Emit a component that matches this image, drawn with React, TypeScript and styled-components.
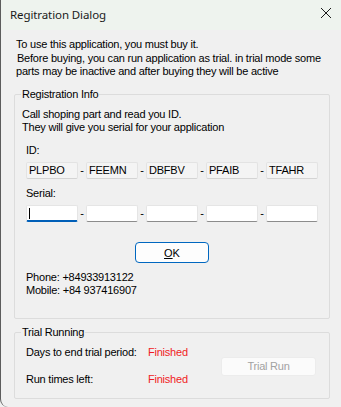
import React from "react";
import styled, { createGlobalStyle } from "styled-components";

const Global = createGlobalStyle`
  html, body { margin: 0; padding: 0; background: #f0f0f0; }
  * { box-sizing: border-box; }
`;

const Window = styled.div`
  width: 341px;
  height: 407px;
  background: #f0f0f0;
  border-left: 1px solid #5c5c5c;
  border-bottom-left-radius: 8px;
  display: flex;
  flex-direction: column;
  font-family: "Liberation Sans", Arial, sans-serif;
  font-size: 11px;
  letter-spacing: -0.22px;
  color: #000;
  overflow: hidden;
`;

const TitleBar = styled.div`
  height: 30px;
  flex: none;
  background: #eef3ee;
  display: flex;
  align-items: center;
  justify-content: space-between;
  padding: 0 9px 2px 9px;
`;

const Title = styled.span`
  font-family: "Noto Sans", "Open Sans", sans-serif;
  font-size: 11.5px;
  letter-spacing: -0.1px;
  color: #1a1a1a;
`;

const CloseBtn = styled.span`
  display: flex;
  width: 12px;
  height: 12px;
  margin-top: -2px;
`;

const Body = styled.div`
  padding: 8px 11px 0 13px;
  display: flex;
  flex-direction: column;
`;

const Intro = styled.div`
  padding-left: 2px;
  line-height: 13px;
`;

const IntroLine = styled.div<{ $top?: number; $shift?: number }>`
  margin-top: ${(p) => p.$top ?? 0}px;
  padding-left: ${(p) => p.$shift ?? 0}px;
  white-space: nowrap;
`;

const Group = styled.fieldset<{ $top: number }>`
  margin: ${(p) => p.$top}px 0 0 0;
  padding: 0;
  border: 1px solid #dcdcdc;
  border-radius: 2px;
  min-width: 0;
`;

const Legend = styled.legend`
  margin-left: 6px;
  padding: 0 1px;
  line-height: 13px;
  font-size: 11px;
`;

const Inner = styled.div<{ $pt: number; $pb: number }>`
  padding: ${(p) => p.$pt}px 6px ${(p) => p.$pb}px 7px;
  line-height: 13px;
`;

const Indented = styled.div<{ $top: number }>`
  margin-top: ${(p) => p.$top}px;
  padding-left: 4px;
`;

const BoxRow = styled.div`
  display: flex;
  align-items: center;
  margin-top: 5px;
`;

const Dash = styled.span`
  width: 8px;
  text-align: center;
  line-height: 13px;
`;

const IdBox = styled.div`
  width: 52px;
  height: 17px;
  background: #f4f4f4;
  border: 1px solid #e3e3e3;
  border-bottom-color: #d4d4d4;
  border-radius: 2px;
  padding-left: 2px;
  line-height: 15px;
  font-size: 11px;
`;

const SerialBox = styled.div<{ $focused?: boolean }>`
  width: 52px;
  height: 17px;
  background: #fff;
  border: 1px solid #e5e5e5;
  border-bottom: ${(p) => (p.$focused ? "2px solid #005fb8" : "1px solid #8c8c8c")};
  border-radius: 2px;
  position: relative;
`;

const Caret = styled.span`
  position: absolute;
  left: 2px;
  top: 2px;
  width: 1px;
  height: 11px;
  background: #000;
`;

const OkRow = styled.div`
  display: flex;
  justify-content: center;
  margin-top: 20px;
  padding-right: 1px;
`;

const OkButton = styled.button`
  width: 74px;
  height: 21px;
  background: #fdfdfd;
  border: 1px solid #0067c0;
  border-radius: 4px;
  font-family: "Liberation Sans", Arial, sans-serif;
  font-size: 11px;
  color: #000;
  padding: 0;
  u { text-decoration: underline; }
`;

const Contact = styled.div`
  margin-top: 8px;
  padding-left: 4px;
  line-height: 13px;
`;

const TrialGrid = styled.div`
  display: grid;
  grid-template-columns: 122px 73px 95px;
  grid-template-rows: 13px 13px;
  row-gap: 14px;
  align-items: center;
  padding-left: 4px;
`;

const Finished = styled.span`
  color: #f01c24;
`;

const TrialButton = styled.button`
  grid-column: 3;
  grid-row: 1 / span 2;
  height: 19px;
  width: 95px;
  background: #fbfbfb;
  border: 1px solid #ececec;
  border-radius: 3px;
  color: #a2a2a2;
  font-family: "Liberation Sans", Arial, sans-serif;
  font-size: 11px;
  letter-spacing: -0.22px;
  padding: 0;
`;

const CloseIcon = () => (
  <svg width="12" height="12" viewBox="0 0 12 12">
    <path d="M1 1 L11 11 M11 1 L1 11" stroke="#1a1a1a" strokeWidth="1" fill="none" />
  </svg>
);

const ids = ["PLPBO", "FEEMN", "DBFBV", "PFAIB", "TFAHR"];

export default function App() {
  return (
    <>
      <Global />
      <Window>
        <TitleBar>
          <Title>Regitration Dialog</Title>
          <CloseBtn>
            <CloseIcon />
          </CloseBtn>
        </TitleBar>
        <Body>
          <Intro>
            <IntroLine>To use this application, you must buy it.</IntroLine>
            <IntroLine $top={1} $shift={1}>
              Before buying, you can run application as trial. in trial mode some
            </IntroLine>
            <IntroLine $shift={-1}>parts may be inactive and after buying they will be active</IntroLine>
          </Intro>

          <Group $top={10}>
            <Legend>Registration Info</Legend>
            <Inner $pt={7} $pb={21}>
              <div>Call shoping part and read you ID.</div>
              <div>They will give you serial for your application</div>
              <Indented $top={10}>
                <div>ID:</div>
                <BoxRow>
                  {ids.map((id, i) => (
                    <React.Fragment key={id}>
                      {i > 0 && <Dash>-</Dash>}
                      <IdBox>{id}</IdBox>
                    </React.Fragment>
                  ))}
                </BoxRow>
              </Indented>
              <Indented $top={8}>
                <div>Serial:</div>
                <BoxRow>
                  {ids.map((id, i) => (
                    <React.Fragment key={id}>
                      {i > 0 && <Dash>-</Dash>}
                      <SerialBox $focused={i === 0}>{i === 0 && <Caret />}</SerialBox>
                    </React.Fragment>
                  ))}
                </BoxRow>
              </Indented>
              <OkRow>
                <OkButton>
                  <u>O</u>K
                </OkButton>
              </OkRow>
              <Contact>
                <div>Phone: +84933913122</div>
                <div>Mobile: +84 937416907</div>
              </Contact>
            </Inner>
          </Group>

          <Group $top={7}>
            <Legend>Trial Running</Legend>
            <Inner $pt={7} $pb={12}>
              <TrialGrid>
                <span>Days to end trial period:</span>
                <Finished>Finished</Finished>
                <TrialButton disabled>Trial Run</TrialButton>
                <span>Run times left:</span>
                <Finished>Finished</Finished>
              </TrialGrid>
            </Inner>
          </Group>
        </Body>
      </Window>
    </>
  );
}
